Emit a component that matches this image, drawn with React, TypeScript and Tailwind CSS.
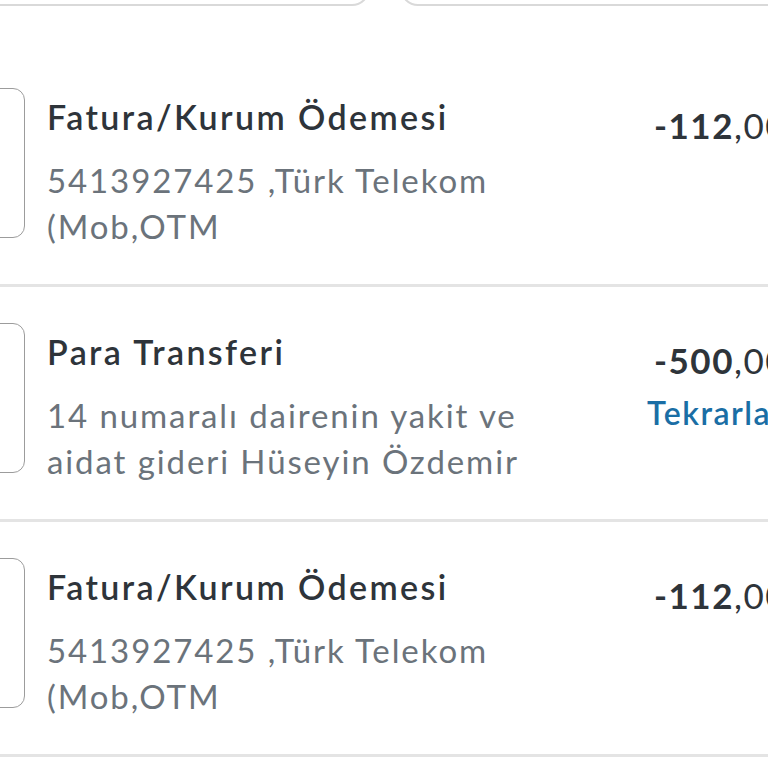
import React from "react";

type Tx = {
  title: string;
  desc: string;
  whole: string;
  frac: string;
  repeat?: boolean;
};

const items: Tx[] = [
  {
    title: "Fatura/Kurum Ödemesi",
    desc: "5413927425 ,Türk Telekom (Mob,OTM",
    whole: "-112",
    frac: ",00 TL",
  },
  {
    title: "Para Transferi",
    desc: "14 numaralı dairenin yakit ve aidat gideri Hüseyin Özdemir",
    whole: "-500",
    frac: ",00 TL",
    repeat: true,
  },
  {
    title: "Fatura/Kurum Ödemesi",
    desc: "5413927425 ,Türk Telekom (Mob,OTM",
    whole: "-112",
    frac: ",00 TL",
  },
];

function Row({ tx }: { tx: Tx }) {
  return (
    <div className="flex h-[235px] w-[900px] items-start border-b-[3px] border-[#e4e4e4] pt-[36px]">
      <div className="-ml-[40px] h-[150px] w-[65px] shrink-0 rounded-[12px] border border-[#9c9c9c]" />
      <div className="ml-[22px] w-[580px] shrink-0 pt-[7px]">
        <div className="text-[34px] font-semibold leading-[44px] tracking-[2.4px] text-[#2e343a]">
          {tx.title}
        </div>
        <div className="mt-[18px] w-[560px] text-[33px] leading-[46px] tracking-[1.9px] text-[#6b737b]">
          {tx.desc}
        </div>
      </div>
      <div className="ml-[27px] flex flex-col pt-[15px]">
        <div className="text-[35px] leading-[44px] tracking-[1.5px] text-[#2e343a]">
          <span className="font-bold">{tx.whole}</span>
          <span>{tx.frac}</span>
        </div>
        {tx.repeat && (
          <div className="-ml-[7px] mt-[11px] text-[32px] font-semibold leading-[40px] tracking-[1.5px] text-[#1a6ea5]">
            Tekrarla
          </div>
        )}
      </div>
    </div>
  );
}

export default function App() {
  return (
    <div
      className="relative h-[768px] w-[768px] overflow-hidden bg-white"
      style={{ fontFamily: "Lato, 'Open Sans', sans-serif" }}
    >
      <div className="flex h-[8px] gap-[30px] overflow-hidden">
        <div className="-ml-[20px] -mt-[40px] h-[46px] w-[390px] shrink-0 rounded-b-[18px] border-2 border-[#d9d9d9]" />
        <div className="-mt-[40px] h-[46px] w-[400px] shrink-0 rounded-b-[18px] border-2 border-[#d9d9d9]" />
      </div>
      <div className="pt-[44px]">
        {items.map((tx, i) => (
          <Row key={i} tx={tx} />
        ))}
      </div>
    </div>
  );
}
